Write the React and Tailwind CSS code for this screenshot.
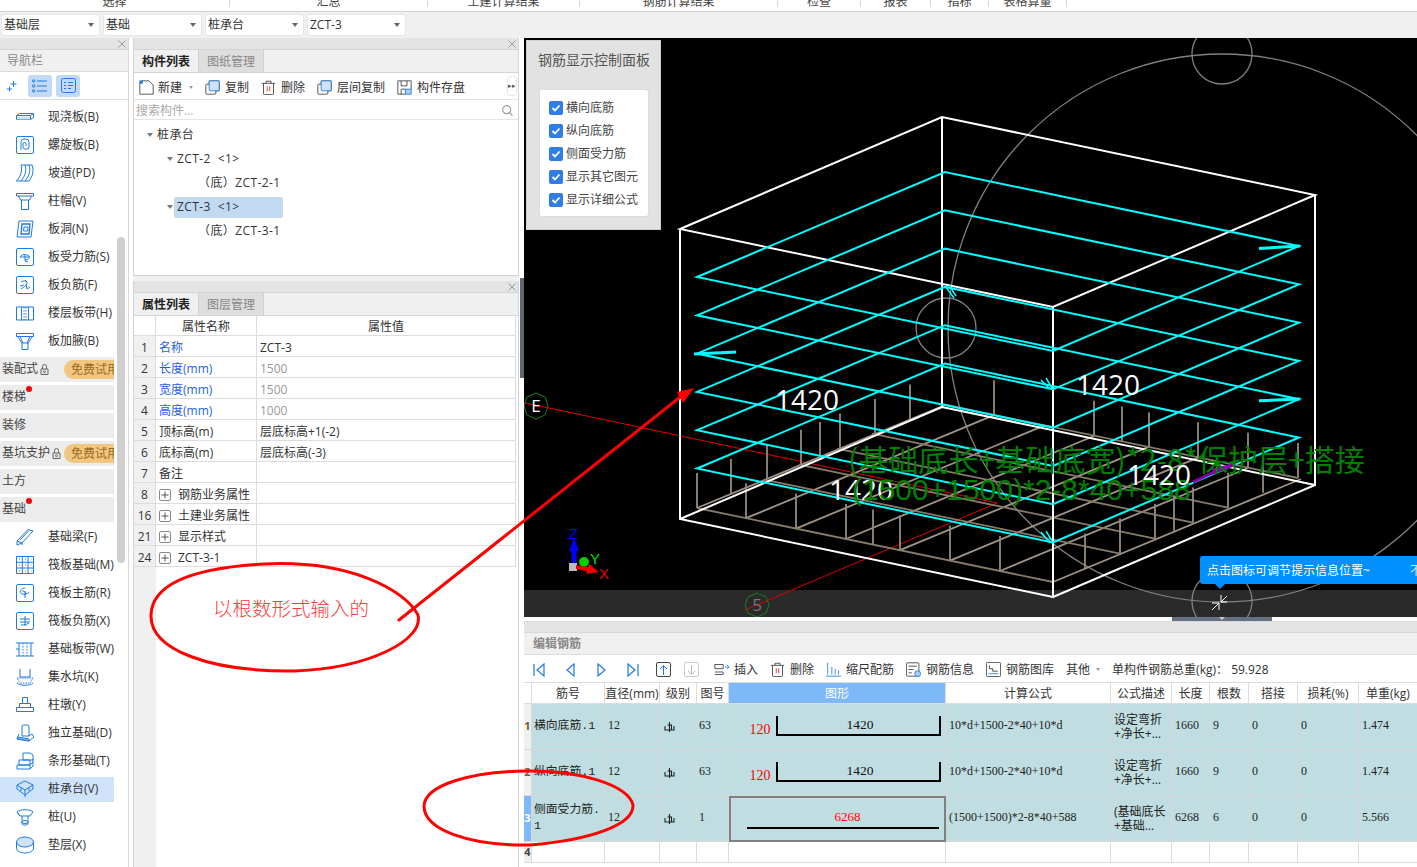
import React from 'react';

const B = '#1f7be0';
const Ico = ({ children, s = 18, c = B, w = 1, vb = 18, className = '' }) => (
  <svg width={s} height={s} viewBox={`0 0 ${vb} ${vb}`} fill="none" stroke={c} strokeWidth={w} className={`shrink-0 ${className}`}>{children}</svg>
);

const sq = <rect x="0.5" y="0.5" width="17" height="17" rx="1.5" />;
const navIcons = {
  slab: <><path d="M0.5 7.5l3-2h14l-3 2zM0.5 7.5v4h14v-4M14.5 11.5l3-2v-4" /><path d="M1 8.5h13v3H1z" fill="#cfe2f8" stroke="none" /></>,
  spiral: <>{sq}<path d="M5 14V6a3 3 0 0 1 3-3h2a3 3 0 0 1 3 3v5a2 2 0 0 1-2 2H9a2 2 0 0 1-2-2V8a1.5 1.5 0 0 1 3 0v2" /></>,
  ramp: <><path d="M5 1h11c2 5 1 11-3 16H0.5C5 12 6.5 6 5 1z" /><path d="M9 1c2 6 0 11-4 16M13 1c2 6 0 11-4 16" /></>,
  cap: <><path d="M0.5 1.5h17v2.5H0.5zM2.5 4l2 4h9l2-4M5.5 8v9.5h7V8" /></>,
  hole: <><path d="M3 1h14l-2 16H1z" /><path d="M6 4h8l-1 10H5z" strokeWidth="1.4" /><path d="M8 7h4l-.5 4H7.5z" /></>,
  force: <>{sq}<path d="M4 9c1-3 7-3 9-1 1 2-1 4-4 4M4 9h10M9 6v7l3 1" /></>,
  neg: <>{sq}<path d="M5 6c3-2 6-1 6 1s-3 4-6 6M4 10l4-1M10 8l1 5 3-2M9 4l2 2" /></>,
  strip: <><path d="M0.5 3h17v13H0.5z" /><path d="M5.5 3v13M12.5 3v13" /><path d="M8 3v13M10 3v13" strokeDasharray="1.5 1.5" /></>,
  haunch: <><path d="M0.5 1.5h17v3H0.5zM1.5 4.5L6 11h6l4.5-6.5M6 11v6.5h6V11M4 4.5L7 11M14 4.5L11 11" /></>,
  beam: <><path d="M1 13L12 1.5l5 1.5L6 15l-5 2zM1 13l5 2M6 15v2" /><path d="M4 12l9-9.5" /></>,
  raft: <><path d="M0.5 0.5h17v17H0.5zM0.5 6.3h17M0.5 12h17M6.3 0.5v17M12 0.5v17" /><path d="M3 3h1M9 3h1M15 3h.5M3 9h1M9 9h1M15 9h.5M3 15h1M9 15h1M15 15h.5" /></>,
  rmain: <>{sq}<path d="M9 4c-5 0-6 5-3 6 2 1 6 0 7-2M9 7v7M6 7c2 0 4 1 4 3" /></>,
  rneg: <>{sq}<path d="M4 7h10M4 10h10M9 4v10M5 13c2 0 5 0 8-2" /></>,
  bstrip: <><path d="M0 3h18M0 16h18M3 3v13M15 3v13" /><path d="M7 3v13M11 3v13" strokeDasharray="1.5 1.5" /><path d="M0 9h3" /></>,
  pit: <><path d="M4 1v8h10V1" /><path d="M1 10h16l-3 5H4z" strokeDasharray="1.5 1" /><path d="M1 15c3 3 13 3 16 0" /></>,
  pier: <><path d="M6.5 1.5h5v6h-5zM3.5 7.5h11v4h-11zM0.5 11.5h17v4H0.5z" /></>,
  indep: <><path d="M7 1h5l1 2v9H6V2zM3 10L1 15l12 2 5-4-2-3-3 2" /><path d="M1 15l12 2v-2L2 13z" fill="#8bbcf0" /></>,
  bar: <><path d="M7 1h7l3 2v5H7zM3 8h11v5H3zM1 13h13l3-3v-3M1 13v4h13l3-3v-4M14 13v4" /></>,
  pile: <><path d="M9 1l8 4-8 5-8-5zM1 5v4l8 6 8-6V5M9 10v7M5 8v3M13 8v3" /></>,
  pile2: <><path d="M1 4c3-3 13-3 16 0l-3 4H4zM1 4l3 4M6 8v8c2 1.5 4 1.5 6 0V8" /><ellipse cx="9" cy="14" rx="3" ry="1.5" /></>,
  pad: <><ellipse cx="9" cy="6" rx="8.5" ry="5" fill="#cfe2f8" /><path d="M0.5 6v6c0 3 4 5 8.5 5s8.5-2 8.5-5V6" /></>,
};

const NavItem = ({ icon, label, active }) => (
  <div className={`h-[25px] shrink-0 my-[1.5px] w-[114px] flex items-center overflow-hidden ${active ? 'bg-[#cfe4fb]' : ''}`}>
    <span className="w-[48px] pl-[16px] shrink-0"><Ico>{navIcons[icon]}</Ico></span>
    <span className="text-[12px] text-[#333] whitespace-nowrap">{label}</span>
  </div>
);

const Lock = ({ className = '' }) => (
  <Ico s={11} vb={11} c="#666" className={className}><path d="M2 5h7v5.5H2zM3.5 5V2.5a2 2 0 0 1 4 0V5" /><circle cx="5.5" cy="7.7" r="1" /></Ico>
);

const Group = ({ label, lock, badge, dot }) => (
  <div className="h-[25px] shrink-0 my-[1.5px] w-[114px] bg-[#ececec] flex items-center overflow-hidden relative">
    <span className="ml-[2px] text-[12px] text-[#444] whitespace-nowrap">{label}</span>
    {lock && <Lock className="ml-[1px]" />}
    {dot && <span className="absolute left-[26px] top-[1px] w-[6px] h-[6px] rounded-full bg-[#f00808]" />}
    {badge && <span className="absolute left-[64px] top-[3px] h-[19px] w-[60px] rounded-l-full bg-[#f1c67f] pl-[7px] text-[12px] leading-[19px] text-[#9a6a20] whitespace-nowrap">免费试用</span>}
  </div>
);

const Close = () => (
  <svg width="8" height="8" viewBox="0 0 8 8" stroke="#9a9a9a" strokeWidth="1"><path d="M0.5 0.5l7 7M7.5 0.5l-7 7" /></svg>
);

const PanelHead = () => (
  <div className="h-[12px] shrink-0 bg-[#e4e4e4] flex items-center justify-end pr-[2px] border-b border-[#d4d4d4]"><Close /></div>
);

const Tab = ({ label, active }) => (
  <div className={`h-full w-[65px] pt-[2px] flex items-center justify-center text-[12px] border-r border-[#d0d0d0] ${active ? 'text-[#222] font-bold bg-[#f0f0f0]' : 'text-[#888] bg-[#dedede]'}`}>{label}</div>
);

const Tool = ({ icon, label, ml, gap = 'ml-[5px]' }) => (
  <div className={`flex items-center ${ml}`}>
    <Ico s={15} vb={18} c="#3a3a3a">{icon}</Ico>
    <span className={`${gap} text-[12px] text-[#333] whitespace-nowrap`}>{label}</span>
  </div>
);

const Row = ({ n, name, value, blue, gray, plus }) => (
  <>
    <div className="bg-[#f0f0f0] pt-[3px] border-r border-b border-[#dcdcdc] text-[12px] text-[#333] flex items-center justify-center">{n}</div>
    <div className={`border-r border-b border-[#dcdcdc] pt-[3px] text-[12px] pl-[3px] flex items-center whitespace-nowrap overflow-hidden ${blue ? 'text-[#1f5fe0]' : 'text-[#333]'}`}>
      {plus && <span className="w-[12px] h-[12px] border border-[#888] rounded-[2px] mr-[7px] flex items-center justify-center shrink-0"><svg width="8" height="8" viewBox="0 0 8 8" stroke="#555" strokeWidth="1"><path d="M4 0.5v7M0.5 4h7" /></svg></span>}
      {name}
    </div>
    <div className={`border-r border-b border-[#dcdcdc] pt-[3px] text-[12px] pl-[3px] flex items-center whitespace-nowrap ${gray ? 'text-[#999]' : 'text-[#333]'}`}>{value}</div>
  </>
);

const Tree = ({ label, pl, arrow, active }) => (
  <div className={`h-[24px] flex items-center text-[12px] text-[#333] whitespace-nowrap tracking-[0.4px] ${pl}`}>
    {arrow && <span className="w-0 h-0 border-x-[3px] border-x-transparent border-t-[4px] border-t-[#777] mr-[4px]" />}
    <span className={active ? 'bg-[#c2d9f2] rounded-[2px] h-[21px] w-[109px] -ml-[3px] pl-[3px] flex items-center' : ''}>{label}</span>
  </div>
);

const mono = "pb-[3px] font-['Liberation_Serif','Noto_Sans_CJK_SC',serif] text-[12px]";
const Th = ({ children, hl }) => (
  <div className={`flex items-center justify-center pt-[2px] text-[12px] whitespace-nowrap overflow-hidden border-r border-b border-[#dcdcdc] ${hl ? 'bg-[#7db8f8] text-white' : 'text-[#333]'}`}>{children}</div>
);
const Td = ({ children, className = '' }) => (
  <div className={`border-r border-b border-[#d8d8d8] bg-[#c0dee1] text-[#222] flex items-center overflow-hidden ${className}`}>{children}</div>
);
const Bracket = () => (
  <div className="flex items-center pl-[16px] w-full">
    <span className="w-[30px] text-center text-[#f00] mt-[6px] font-['Liberation_Serif',serif] text-[14px]">120</span>
    <div className="ml-[1px] w-[165px] h-[20px] border-x-2 border-b-2 border-black flex items-start justify-center mt-[-1px]">
      <span className="font-['Liberation_Serif',serif] text-[13.5px] leading-[16px] pt-[1px] ml-[3px] text-[#111]">1420</span>
    </div>
  </div>
);
const EditRow = ({ n, name, sub, tu, shape, formula, desc, len, count, w, sel }) => (
  <>
    <div className={`border-r border-b border-[#d8d8d8] flex items-center justify-center text-[11px] font-bold ${sel ? 'bg-[#7db8f8] text-white' : 'bg-[#f0f0f0] text-[#7a5a30]'}`}>{n}</div>
    <Td className="pl-[2px] font-['Liberation_Mono','Noto_Sans_CJK_SC',monospace] text-[11.8px] leading-[16px] pb-[2px]"><span>{name}{sub && <><br />{sub}</>}</span></Td>
    <Td className={`pl-[3px] ${mono}`}>12</Td>
    <Td className="pl-[4px]"><svg width="12" height="12" viewBox="0 0 12 12" fill="none" stroke="#222" strokeWidth="1.1"><path d="M1 5v4h9V5M5.5 1v10M3.5 4h4v5" /></svg></Td>
    <Td className={`pl-[2px] ${mono}`}>{tu}</Td>
    {shape}
    <Td className={`pl-[3px] whitespace-nowrap ${mono}`}>{formula}</Td>
    <Td className="pl-[3px] text-[12px] leading-[14px]"><span className="whitespace-pre">{desc}</span></Td>
    <Td className={`pl-[3px] ${mono}`}>{len}</Td>
    <Td className={`pl-[3px] ${mono}`}>{count}</Td>
    <Td className={`pl-[3px] ${mono}`}>0</Td>
    <Td className={`pl-[3px] ${mono}`}>0</Td>
    <Td className={`pl-[3px] ${mono}`}>{w}</Td>
  </>
);

const Blank = () => <div className="border-r border-b border-[#dcdcdc]" />;

/* 3D scene */
const lerp = (a, b, t) => [a[0] + (b[0] - a[0]) * t, a[1] + (b[1] - a[1]) * t];
const L = [697, 508], Bk = [945, 405], R = [1298, 478], F = [1053, 582];
const atX = (a, b, x) => lerp(a, b, (x - a[0]) / (b[0] - a[0]));
const frontLeftX = [746, 796, 846, 873, 900, 950, 1000];
const backLeftX = [731, 767, 801, 820, 840, 875, 910];
const backRightX = [994, 1094, 1122, 1149, 1198, 1248, 1298];
const frontRightX = [1085, 1120, 1155, 1174, 1193, 1228, 1263];
const seg = (p, q) => `M${p[0]} ${p[1]}L${q[0]} ${q[1]}`;
const meshA = [0, ...[746, 796, 846, 900, 950, 1000].map(x => (x - L[0]) / (F[0] - L[0])), 1]
  .map(t => { const p = lerp(L, F, t); return seg(p, [p[0] + Bk[0] - L[0], p[1] + Bk[1] - L[1]]); }).join('');
const meshB = [0, ...[1120, 1155, 1193, 1228].map(x => (x - F[0]) / (R[0] - F[0])), 1]
  .map(t => { const p = lerp(F, R, t); return seg(p, [p[0] + L[0] - F[0], p[1] + L[1] - F[1]]); }).join('');
const stub = (p, h = 35) => seg(p, [p[0], p[1] - h]);
const stubs1 = [...frontLeftX.map(x => stub(atX(L, F, x))), ...backLeftX.map(x => stub(atX(L, Bk, x))), stub(L)].join('');
const stubs2 = [...backRightX.map(x => stub(atX(Bk, R, x))), ...frontRightX.map(x => stub(atX(F, R, x))), stub(F, 40), stub(R)].join('');
const layers = [0, 1, 2, 3, 4, 5].map(i => {
  const d = i * 38.3;
  return `M697 ${277 + d}L945 ${172 + d}L1299 ${246 + d}L1053 ${351 + d}Z`;
}).join('');

const Scene = () => (
  <svg className="absolute inset-0 w-full h-full" viewBox="524 38 893 579" fill="none">
    <g stroke="#808080" strokeWidth="1.3">
      <circle cx="1222" cy="328" r="274" />
      <circle cx="1222" cy="54" r="30" />
      <circle cx="946" cy="328" r="30" />
      <circle cx="1222" cy="601" r="30" />
    </g>
    <g stroke="#e00000" strokeWidth="1">
      <path d="M524 402.7L997 503M745 610L997 503" />
    </g>
    <path d={meshA} stroke="#a09488" strokeWidth="1.8" />
    <path d={meshB} stroke="#857c6a" strokeWidth="1.8" />
    <path d={stubs1} stroke="#958a7e" strokeWidth="1.8" />
    <path d={stubs2} stroke="#958a7e" strokeWidth="1.8" />
    <path d="M680 229L942 117L1315 195L1053 307ZM680 229V519L1053 597V307M1053 597L1315 485V195M680 519L942 407L1315 485M942 117V407" stroke="#fff" strokeWidth="2" />
    <path d={layers} stroke="#00ffff" strokeWidth="2" />
    <path d="M1259 248.5L1300 246M1259 400.7L1300 399M694 354L736 352" stroke="#00ffff" strokeWidth="3" />
    <path d="M945 286L954 298M949 285L956 296M1041 380L1050 389M1046 378L1052 388M1041 532L1050 543M1046 531L1052 541" stroke="#00ffff" strokeWidth="1.5" />
    <path d="M1193 482L1210 474M1210 474L1233 465L1212 470" stroke="#8800aa" strokeWidth="3" />
    <g stroke="#1e7a1e" strokeWidth="1">
      <path d="M536 393l9 4 3 9-3 9-9 4-9-4-3-9 3-9z" />
      <path d="M757 593l9 4 3 8-3 8-9 4-9-4-3-8 3-8z" />
    </g>
    <text x="536" y="412" textAnchor="middle" fill="#fff" fontSize="17" fontFamily="Open Sans, sans-serif">E</text>
    <text x="757" y="611" textAnchor="middle" fill="#777" fontSize="17" fontFamily="Open Sans, sans-serif">5</text>
    <g fill="#fff" fontSize="28" fontFamily="Open Sans, sans-serif">
      <text x="775" y="410">1420</text>
      <text x="1076" y="395">1420</text>
      <text x="829" y="500">1420</text>
    </g>
    <g fill="#008000" fontSize="30" fontFamily="Liberation Sans, Noto Sans CJK SC, sans-serif">
      <text x="848" y="471" fontFamily="Noto Sans CJK SC, sans-serif" fontSize="30.1">(基础底长+基础底宽)*2-8*保护层+搭接</text>
      <text x="852" y="500">(1500+1500)*2-8*40+588</text>
    </g>
    <text x="1127" y="485" fill="#fff" fontSize="28" fontFamily="Open Sans, sans-serif">1420</text>
    {/* axis gizmo */}
    <path d="M574 565V548" stroke="#0000ff" strokeWidth="5" />
    <path d="M574 538l-5 13h10z" fill="#0000ff" />
    <rect x="569" y="563" width="8" height="8" fill="#bdbdbd" />
    <circle cx="584" cy="562" r="5" fill="#00d000" />
    <path d="M576 565l12 2 1-3 10 8-12 2-1-3-10-2z" fill="#f00000" />
    <text x="569" y="539" fill="#0000ff" fontSize="15" fontFamily="Liberation Sans, sans-serif">Z</text>
    <text x="590" y="564" fill="#00e000" fontSize="15" fontFamily="Liberation Sans, sans-serif">Y</text>
    <text x="599" y="579" fill="#f00000" fontSize="15" fontFamily="Liberation Sans, sans-serif">X</text>
    {/* shrink icon */}
    <path d="M1221 602h6M1221 602v-7M1221 602l6-6M1219 603h-7M1219 603v7M1219 603l-7 7" stroke="#fff" strokeWidth="1" />
  </svg>
);

const Check = ({ label }) => (
  <div className="h-[23px] flex items-center">
    <span className="w-[14px] h-[14px] rounded-[2px] bg-[#2f7ee6] flex items-center justify-center">
      <svg width="10" height="10" viewBox="0 0 10 10" fill="none" stroke="#fff" strokeWidth="1.8"><path d="M1.5 5l2.5 2.5 4.5-5" /></svg>
    </span>
    <span className="ml-[3px] text-[12px] text-[#444] whitespace-nowrap">{label}</span>
  </div>
);

const Nav = ({ d }) => (
  <svg width="12" height="16" viewBox="0 0 12 16" fill="none" stroke="#1f7be0" strokeWidth="1.2" className="block"><path d={d} /></svg>
);

const topTabs = [
  ['选择', 'w-[230px]'], ['汇总', 'w-[198px]'], ['土建计算结果', 'w-[152px]'], ['钢筋计算结果', 'w-[198px]'],
  ['检查', 'w-[83px]'], ['报表', 'w-[70px]'], ['指标', 'w-[58px]'], ['表格算量', 'w-[78px]'],
];

const trash = <><path d="M1 4h16M6 4V1.5h6V4M3 4v12.5a1 1 0 0 0 1 1h10a1 1 0 0 0 1-1V4" /><path d="M7.5 7.5v6M10.5 7.5v6" stroke="#d22" /></>;
const copyIc = <><path d="M5 5V1h12v12h-4" /><rect x="1" y="5" width="12" height="12" rx="1" /><rect x="5" y="1" width="12" height="12" rx="1" fill="#cfe2f8" stroke="#1f7be0" /></>;

export default function App() {
  return (
    <div className="relative w-[1417px] h-[867px] overflow-hidden bg-[#f0f0f0] font-['Open_Sans','Noto_Sans_CJK_SC',sans-serif]">
      {/* top tabs */}
      <div className="h-[12px] bg-white border-b border-[#d4d4d4] flex overflow-hidden">
        {topTabs.map(([t, w]) => (
          <div key={t} className={`${w} h-[7px] border-r border-[#d8d8d8] text-center text-[12px] leading-[3px] text-[#444] overflow-hidden`}>{t}</div>
        ))}
      </div>
      {/* dropdown bar */}
      <div className="h-[26px] flex items-start pt-[2px] pl-[1px] gap-[3px]">
        {['基础层', '基础', '桩承台', 'ZCT-3'].map(t => (
          <div key={t} className="w-[99px] h-[21.5px] bg-white rounded-[3px] border border-[#e6e6e6] flex items-center justify-between pl-[2px] pr-[5px] text-[12px] text-[#333]">
            <span>{t}</span>
            <span className="w-0 h-0 border-x-[3px] border-x-transparent border-t-[4px] border-t-[#666]" />
          </div>
        ))}
      </div>
      {/* main */}
      <div className="h-[829px] flex">
        {/* navigator */}
        <div className="w-[129px] shrink-0 bg-white border-r border-[#d8d8d8] flex flex-col relative overflow-hidden">
          <PanelHead />
          <div className="h-[22px] shrink-0 bg-[#f0f0f0] border-b border-[#dcdcdc] pl-[7px] flex items-center text-[12px] text-[#888]">导航栏</div>
          <div className="h-[28px] shrink-0 border-b border-[#dcdcdc] flex items-center pl-[7px]">
            <svg width="10" height="12" viewBox="0 0 10 12" fill="none" stroke="#1f7be0" strokeWidth="1"><path d="M6.5 1v6M3.5 4h6M2.5 6.5v5M0 9h5" /></svg>
            <span className="ml-[11px] w-[24px] h-[22px] bg-[#c2daf6] rounded-[3px] flex items-center justify-center">
              <svg width="16" height="14" viewBox="0 0 16 14" fill="none" stroke="#1f7be0" strokeWidth="1"><path d="M5 2h10M5 7h10M5 12h10" /><circle cx="1.7" cy="2" r="1.2" /><circle cx="1.7" cy="7" r="1.2" /><circle cx="1.7" cy="12" r="1.2" /></svg>
            </span>
            <span className="ml-[4px] w-[24px] h-[22px] bg-[#c2daf6] rounded-[3px] flex items-center justify-center">
              <svg width="15" height="15" viewBox="0 0 15 15" fill="none" stroke="#1f7be0" strokeWidth="1"><rect x="0.5" y="0.5" width="14" height="14" rx="2" /><path d="M3 4.5h2M7 4.5h5M3 7.5h2M7 7.5h5M3 10.5h2M7 10.5h3" /></svg>
            </span>
          </div>
          <div className="pt-[3px] flex flex-col">
            <NavItem icon="slab" label="现浇板(B)" />
            <NavItem icon="spiral" label="螺旋板(B)" />
            <NavItem icon="ramp" label="坡道(PD)" />
            <NavItem icon="cap" label="柱帽(V)" />
            <NavItem icon="hole" label="板洞(N)" />
            <NavItem icon="force" label="板受力筋(S)" />
            <NavItem icon="neg" label="板负筋(F)" />
            <NavItem icon="strip" label="楼层板带(H)" />
            <NavItem icon="haunch" label="板加腋(B)" />
            <Group label="装配式" lock badge />
            <Group label="楼梯" dot />
            <Group label="装修" />
            <Group label="基坑支护" lock badge />
            <Group label="土方" />
            <Group label="基础" dot />
            <NavItem icon="beam" label="基础梁(F)" />
            <NavItem icon="raft" label="筏板基础(M)" />
            <NavItem icon="rmain" label="筏板主筋(R)" />
            <NavItem icon="rneg" label="筏板负筋(X)" />
            <NavItem icon="bstrip" label="基础板带(W)" />
            <NavItem icon="pit" label="集水坑(K)" />
            <NavItem icon="pier" label="柱墩(Y)" />
            <NavItem icon="indep" label="独立基础(D)" />
            <NavItem icon="bar" label="条形基础(T)" />
            <NavItem icon="pile" label="桩承台(V)" active />
            <NavItem icon="pile2" label="桩(U)" />
            <NavItem icon="pad" label="垫层(X)" />
          </div>
          <div className="absolute left-[117px] top-[199px] w-[8px] h-[326px] rounded-full bg-[#cfcfcf]" />
        </div>

        {/* centre */}
        <div className="w-[4px] shrink-0 bg-white" />
        <div className="w-[386px] shrink-0 flex flex-col">
          <div className="h-[238px] shrink-0 bg-white border-x border-b border-[#d4d4d4] flex flex-col">
            <PanelHead />
            <div className="h-[23px] bg-[#f0f0f0] flex border-b border-[#d4d4d4]">
              <Tab label="构件列表" active /><Tab label="图纸管理" />
            </div>
            <div className="h-[27px] pt-[3px] flex items-center border-b border-[#e4e4e4] relative">
              <Tool ml="ml-[5px]" gap="ml-[4px]" label="新建" icon={<><path d="M3 1h9l5 5v11H1V3" /><path d="M0.5 0.5h4v4h-4z" fill="#1f7be0" stroke="none" /></>} />
              <span className="ml-[7px] w-0 h-0 border-x-[2.5px] border-x-transparent border-t-[3px] border-t-[#999]" />
              <Tool ml="ml-[12px]" label="复制" icon={copyIc} />
              <Tool ml="ml-[12px]" label="删除" icon={trash} />
              <Tool ml="ml-[12px]" label="层间复制" icon={copyIc} />
              <Tool ml="ml-[12px]" label="构件存盘" icon={<><path d="M1 1h16v10M1 1v16h9M5 1v6h7V1M5 17v-6h5" /><rect x="10" y="11" width="7" height="6" fill="#a8cdf5" stroke="#1f7be0" /></>} />
              <span className="absolute right-[1px] top-[3px] w-[10px] h-[20px] border border-[#e8e8e8] rounded-[3px] text-[7px] leading-[18px] text-center text-[#555]">▸▸</span>
            </div>
            <div className="h-[20px] pt-[2px] flex items-center justify-between pl-[2px] pr-[5px] border-b border-[#e4e4e4] text-[12px] text-[#aaa]">
              <span>搜索构件...</span>
              <svg width="11" height="11" viewBox="0 0 11 11" fill="none" stroke="#a0a0a0" strokeWidth="1.2"><circle cx="4.7" cy="4.7" r="4" /><path d="M7.5 7.5l3 3" /></svg>
            </div>
            <div className="pt-[3px]">
              <Tree label="桩承台" pl="pl-[13px]" arrow />
              <Tree label={'ZCT-2\u00a0\u00a0<1>'} pl="pl-[33px]" arrow />
              <Tree label={'（底）ZCT-2-1'} pl="pl-[64px]" />
              <Tree label={'ZCT-3\u00a0\u00a0<1>'} pl="pl-[33px]" arrow active />
              <Tree label={'（底）ZCT-3-1'} pl="pl-[64px]" />
            </div>
          </div>
          <div className="h-[5px] shrink-0 bg-[#f0f0f0]" />
          <div className="flex-1 bg-white border-x border-[#d4d4d4] flex flex-col relative">
            <PanelHead />
            <div className="h-[23px] bg-[#f0f0f0] flex border-b border-[#d4d4d4] shrink-0">
              <Tab label="属性列表" active /><Tab label="图层管理" />
            </div>
            <div className="grid grid-cols-[22px_101px_259px] grid-rows-[20px_repeat(11,21px)]">
              <div className="border-r border-b border-[#dcdcdc]" />
              <div className="border-r border-b border-[#dcdcdc] pt-[2px] text-[12px] text-[#333] flex items-center justify-center">属性名称</div>
              <div className="border-r border-b border-[#dcdcdc] pt-[2px] text-[12px] text-[#333] flex items-center justify-center">属性值</div>
              <Row n="1" name="名称" value="ZCT-3" blue />
              <Row n="2" name="长度(mm)" value="1500" blue gray />
              <Row n="3" name="宽度(mm)" value="1500" blue gray />
              <Row n="4" name="高度(mm)" value="1000" blue gray />
              <Row n="5" name="顶标高(m)" value="层底标高+1(-2)" />
              <Row n="6" name="底标高(m)" value="层底标高(-3)" />
              <Row n="7" name="备注" value="" />
              <Row n="8" name="钢筋业务属性" value="" plus />
              <Row n="16" name="土建业务属性" value="" plus />
              <Row n="21" name="显示样式" value="" plus />
              <Row n="24" name="ZCT-3-1" value="" plus />
            </div>
            <div className="flex-1 w-[22px] bg-[#f0f0f0]" />
          </div>
        </div>

        {/* splitter */}
        <div className="w-[5px] shrink-0 bg-white relative">
          <div className="absolute left-[1px] top-[240px] w-[4px] h-[100px] bg-[#5f6670]" />
        </div>

        {/* right */}
        <div className="flex-1 min-w-0 overflow-hidden flex flex-col bg-white">
          <div className="relative h-[579px] shrink-0 bg-black flex flex-col">
            <div className="flex-1" />
            <div className="h-[27px] bg-[#2a2a2a]" />
            <Scene />
            <div className="absolute left-[2px] top-[2px] w-[135px] h-[190px] bg-[#e2e2e2] border border-[#d0d0d0] px-[12px] pt-[9px]">
              <div className="text-[14px] leading-[19px] text-[#555] whitespace-nowrap -ml-[1px]">钢筋显示控制面板</div>
              <div className="mt-[20px] w-[110px] h-[128px] bg-white rounded-[3px] border border-[#dcdcdc] pl-[9px] pt-[6px]">
                {['横向底筋', '纵向底筋', '侧面受力筋', '显示其它图元', '显示详细公式'].map(t => <Check key={t} label={t} />)}
              </div>
            </div>
            <div className="absolute left-[676px] right-0 top-[518px] h-[28px] pt-[2px] bg-[#0090ff] rounded-l-[3px] flex items-center justify-between overflow-hidden text-[12px] text-white pl-[7px]">
              <span>点击图标可调节提示信息位置~</span>
              <span className="w-[7px] overflow-hidden opacity-80">不</span>
            </div>
            <div className="absolute left-[691px] top-[546px] w-0 h-0 border-x-[5px] border-x-transparent border-t-[5px] border-t-[#0090ff]" />
          </div>
          <div className="h-[4px] shrink-0 bg-white relative">
            <div className="absolute left-[648px] top-0 w-[100px] h-[4px] bg-[#667080] flex justify-center">
              <span className="w-0 h-0 border-x-[3px] border-x-transparent border-t-[3px] border-t-[#c8ccd2]" />
            </div>
          </div>
          <div className="h-[12px] shrink-0 bg-[#e4e4e4] border-y border-[#d8d8d8]" />
          <div className="h-[22px] shrink-0 bg-[#f0f0f0] border-b border-[#dcdcdc] pl-[9px] flex items-center text-[12px] font-bold text-[#888]">编辑钢筋</div>
          <div className="h-[28px] shrink-0 flex items-center border-b border-[#dcdcdc] pl-[9px] pt-[2px] text-[12px] text-[#333] whitespace-nowrap">
            <Nav d="M1 2v12M11 2L4 8l7 6z" />
            <span className="ml-[20px]"><Nav d="M9 2L2 8l7 6z" /></span>
            <span className="ml-[19px]"><Nav d="M2 2l7 6-7 6z" /></span>
            <span className="ml-[19px]"><Nav d="M1 2l7 6-7 6zM11 2v12" /></span>
            <span className="ml-[17px] w-[15px] h-[15px] border border-[#444] rounded-[2px] flex items-center justify-center"><svg width="9" height="10" viewBox="0 0 9 10" fill="none" stroke="#1f7be0"><path d="M4.5 10V1M1 4l3.5-3.5L8 4" /></svg></span>
            <span className="ml-[13px] w-[15px] h-[15px] border border-[#ccc] rounded-[2px] flex items-center justify-center"><svg width="9" height="10" viewBox="0 0 9 10" fill="none" stroke="#bbb"><path d="M4.5 0v9M1 6l3.5 3.5L8 6" /></svg></span>
            <Tool ml="ml-[15px]" label="插入" icon={<><path d="M1 3h10v5H1zM1 12h10v3H1" /><path d="M13 6h5M15.5 3.5L18 6l-2.5 2.5" stroke="#1f7be0" /></>} />
            <Tool ml="ml-[12px]" label="删除" icon={trash} />
            <Tool ml="ml-[12px]" label="缩尺配筋" icon={<><path d="M2 1v14M7 6v9M11 8v7M15 10v5M0 17h18" stroke="#1f7be0" /></>} />
            <Tool ml="ml-[12px]" label="钢筋信息" icon={<><rect x="0.5" y="1" width="15" height="16" rx="1" /><path d="M3 5h10M3 9h6M3 13h4" /><circle cx="14" cy="14" r="3.5" fill="#a8cdf5" stroke="#1f7be0" /></>} />
            <Tool ml="ml-[12px]" label="钢筋图库" icon={<><rect x="0.5" y="0.5" width="17" height="17" rx="1.5" /><path d="M4 4v4h4v3h6" stroke="#333" /><path d="M3 14h12" stroke="#1f7be0" /></>} />
            <span className="ml-[12px]">其他</span>
            <span className="ml-[6px] w-0 h-0 border-x-[2.5px] border-x-transparent border-t-[3px] border-t-[#999]" />
            <span className="ml-[12px]">单构件钢筋总重(kg)：{'\u00a0'}59.928</span>
          </div>
          <div className="w-[932px] grid grid-cols-[8px_73px_55px_37px_32px_217px_165px_61px_38px_39px_49px_61px_97px] grid-rows-[21px_46px_46px_46px_21px]">
            <Th />
            <Th>筋号</Th><Th>直径(mm)</Th><Th>级别</Th><Th>图号</Th><Th hl>图形</Th><Th>计算公式</Th><Th>公式描述</Th><Th>长度</Th><Th>根数</Th><Th>搭接</Th><Th>损耗(%)</Th>
            <div className="flex items-center pl-[7px] pt-[2px] text-[12px] text-[#333] border-b border-[#dcdcdc]">单重(kg)</div>
            <EditRow n="1" name="横向底筋.1" tu="63" formula="10*d+1500-2*40+10*d" desc={'设定弯折\n+净长+…'} len="1660" count="9" w="1.474" shape={<Td><Bracket /></Td>} />
            <EditRow n="2" name="纵向底筋.1" tu="63" formula="10*d+1500-2*40+10*d" desc={'设定弯折\n+净长+…'} len="1660" count="9" w="1.474" shape={<Td><Bracket /></Td>} />
            <EditRow n="3" sel name="侧面受力筋." sub="1" tu="1" formula="(1500+1500)*2-8*40+588" desc={'(基础底长\n+基础…'} len="6268" count="6" w="5.566" shape={
              <div className="border-2 border-[#808080] bg-[#c0dee1] flex flex-col items-center pt-[12px]">
                <span className="ml-[20px] text-[#f00] font-['Liberation_Serif',serif] text-[13px] leading-[14px]">6268</span>
                <div className="mt-[3px] ml-[10px] w-[192px] h-[2px] bg-black" />
              </div>
            } />
            <div className="bg-[#f0f0f0] border-r border-b border-[#dcdcdc] text-[11px] font-bold text-[#444] flex items-center justify-center">4</div>
            <Blank /><Blank /><Blank /><Blank /><Blank /><Blank /><Blank /><Blank /><Blank /><Blank /><Blank />
            <div className="border-b border-[#dcdcdc]" />
          </div>
        </div>
      </div>

      {/* hand-drawn annotations */}
      <svg className="absolute inset-0 w-full h-full pointer-events-none" viewBox="0 0 1417 867" fill="none">
        <g stroke="#ff0000" strokeWidth="3" strokeLinecap="round">
          <path d="M265 564C350 560 405 590 418 615C424 640 370 668 295 671C210 672 150 650 151 615C152 585 190 568 265 564Z" />
          <path d="M399 620L684 394" />
          <path d="M525 771C580 770 628 785 633 805C634 825 590 840 530 845C470 846 424 830 424 806C425 785 470 772 525 771Z" />
        </g>
        <path d="M694 388L677 392L683 403Z" fill="#ff0000" />
        <text x="213" y="616" fill="#ff3838" fontSize="19.5" fontWeight="300" fontFamily="Noto Sans CJK SC, sans-serif">以根数形式输入的</text>
      </svg>
    </div>
  );
}
